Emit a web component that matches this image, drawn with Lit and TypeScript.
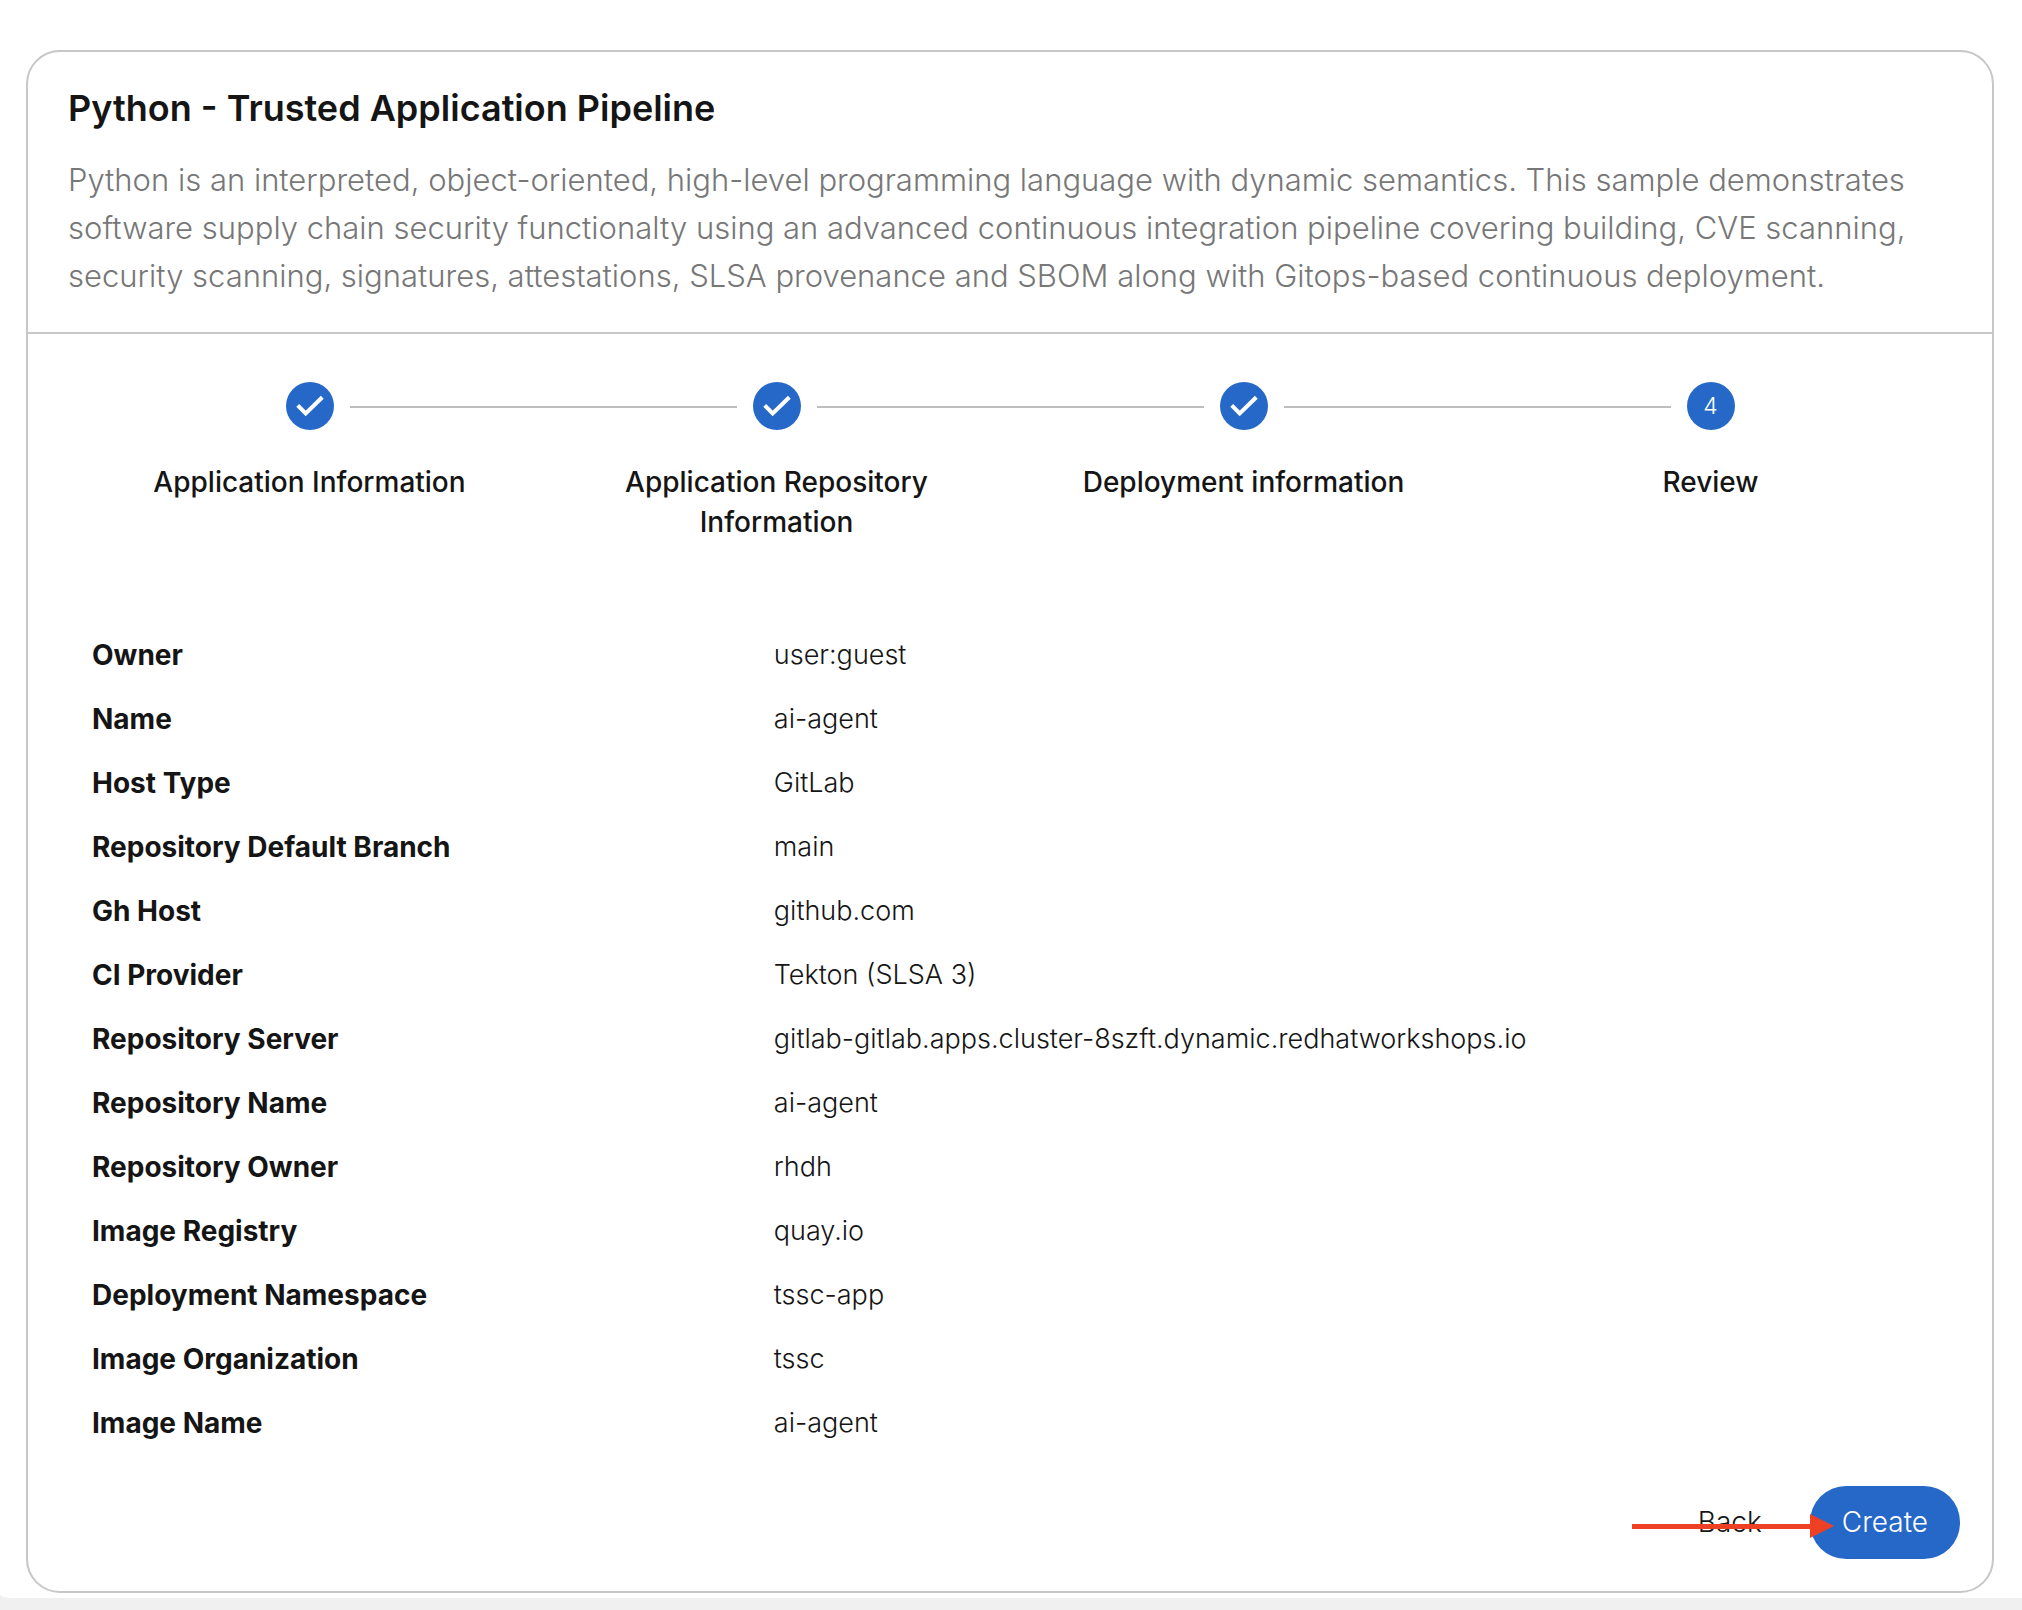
import { LitElement, html, css, svg } from "lit";
import { customElement, property } from "lit/decorators.js";

interface Step {
  label: string;
  done: boolean;
}

const STEPS: Step[] = [
  { label: "Application Information", done: true },
  { label: "Application Repository Information", done: true },
  { label: "Deployment information", done: true },
  { label: "Review", done: false },
];

const REVIEW: [string, string][] = [
  ["Owner", "user:guest"],
  ["Name", "ai-agent"],
  ["Host Type", "GitLab"],
  ["Repository Default Branch", "main"],
  ["Gh Host", "github.com"],
  ["CI Provider", "Tekton (SLSA 3)"],
  ["Repository Server", "gitlab-gitlab.apps.cluster-8szft.dynamic.redhatworkshops.io"],
  ["Repository Name", "ai-agent"],
  ["Repository Owner", "rhdh"],
  ["Image Registry", "quay.io"],
  ["Deployment Namespace", "tssc-app"],
  ["Image Organization", "tssc"],
  ["Image Name", "ai-agent"],
];

const checkMark = svg`<path d="M11.7 23.3 19.7 31.5 36.3 15.3" fill="none" stroke="#fff" stroke-width="4"></path>`;

@customElement("wizard-stepper")
export class WizardStepper extends LitElement {
  @property({ attribute: false }) steps: Step[] = [];

  static styles = css`
    :host {
      display: block;
    }
    .steps {
      display: flex;
      margin: 0;
      padding: 0;
      list-style: none;
    }
    .step {
      flex: 1 1 0;
      display: flex;
      flex-direction: column;
      gap: 32px;
    }
    .track {
      display: flex;
      align-items: center;
      gap: 16px;
    }
    .line {
      flex: 1;
      height: 2px;
      margin-top: 2px;
      background: #bdbdbd;
    }
    .step:first-child .before,
    .step:last-child .after {
      visibility: hidden;
    }
    .before {
      margin-left: 0;
    }
    .dot {
      flex: none;
      display: grid;
      place-items: center;
      width: 48px;
      height: 48px;
      border-radius: 50%;
      background: #2668c8;
      color: #fff;
      font-size: 23px;
      font-weight: 300;
      line-height: 48px;
    }
    .check {
      display: block;
      width: 48px;
      height: 48px;
    }
    .label {
      padding: 0 64px;
      color: #151515;
      font-size: 28px;
      font-weight: 500;
      line-height: 40px;
      text-align: center;
    }
  `;

  render() {
    return html`<ol class="steps">
      ${this.steps.map(
        (step, i) => html`<li class="step">
          <div class="track">
            <span class="line before"></span>
            <span class="dot">
              ${step.done
                ? html`<svg class="check" viewBox="0 0 48 48" role="img" aria-label="Completed">${checkMark}</svg>`
                : i + 1}
            </span>
            <span class="line after"></span>
          </div>
          <div class="label">${step.label}</div>
        </li>`
      )}
    </ol>`;
  }
}

@customElement("app-root")
export class AppRoot extends LitElement {
  static styles = css`
    :host {
      display: block;
      padding-bottom: 12px;
      background: #f0f0f0;
      color: #151515;
      font-family: Inter, "Open Sans", sans-serif;
    }
    .page {
      padding: 50px 28px 5px 26px;
      border-bottom-left-radius: 12px 4px;
      background: #fff;
    }
    .card {
      border: 2px solid #c7c7c7;
      border-radius: 34px;
    }
    .header {
      padding: 34px 40px 32px;
      border-bottom: 2px solid #c7c7c7;
    }
    .title {
      margin: 0 0 26px;
      font-size: 36px;
      font-weight: 600;
      line-height: 44px;
    }
    .description {
      margin: 0;
      color: #777;
      font-size: 31px;
      font-weight: 300;
      line-height: 48px;
    }
    .body {
      padding: 48px 32px 32px;
    }
    .content {
      padding: 0 16px;
    }
    .review {
      width: 100%;
      margin-top: 81px;
      border-collapse: collapse;
      font-size: 27px;
      line-height: 40px;
      text-align: left;
    }
    .key,
    .value {
      padding: 12px 16px;
    }
    .key {
      width: 36.5%;
      box-sizing: border-box;
      font-size: 28px;
      font-weight: 700;
    }
    .value {
      font-weight: 300;
    }
    .actions {
      position: relative;
      display: flex;
      justify-content: flex-end;
      gap: 16px;
      margin-top: 31px;
    }
    .button {
      padding: 16px 32px;
      border: 0;
      border-radius: 36px;
      background: transparent;
      color: #151515;
      font: 300 28px/41px Inter, "Open Sans", sans-serif;
      cursor: pointer;
    }
    .primary {
      background: #2668c8;
      color: #fff;
    }
    .arrow {
      position: absolute;
      top: 28px;
      right: 126px;
      width: 202px;
      height: 24px;
      pointer-events: none;
    }
  `;

  render() {
    return html`<main class="page">
      <section class="card">
        <header class="header">
          <h1 class="title">Python - Trusted Application Pipeline</h1>
          <p class="description">
            Python is an interpreted, object-oriented, high-level programming language with dynamic semantics. This
            sample demonstrates software supply chain security functionalty using an advanced continuous integration
            pipeline covering building, CVE scanning, security scanning, signatures, attestations, SLSA provenance and
            SBOM along with Gitops-based continuous deployment.
          </p>
        </header>
        <div class="body">
          <div class="content">
            <wizard-stepper .steps=${STEPS}></wizard-stepper>
            <table class="review">
              <tbody>
                ${REVIEW.map(
                  ([key, value]) => html`<tr>
                    <th class="key" scope="row">${key}</th>
                    <td class="value">${value}</td>
                  </tr>`
                )}
              </tbody>
            </table>
          </div>
          <div class="actions">
            <button class="button" type="button">Back</button>
            <button class="button primary" type="button">Create</button>
            <svg class="arrow" viewBox="0 0 202 24" aria-hidden="true">
              <path d="M0 10h178V0l24 12-24 12V15H0z" fill="#ee4024"></path>
            </svg>
          </div>
        </div>
      </section>
    </main>`;
  }
}
